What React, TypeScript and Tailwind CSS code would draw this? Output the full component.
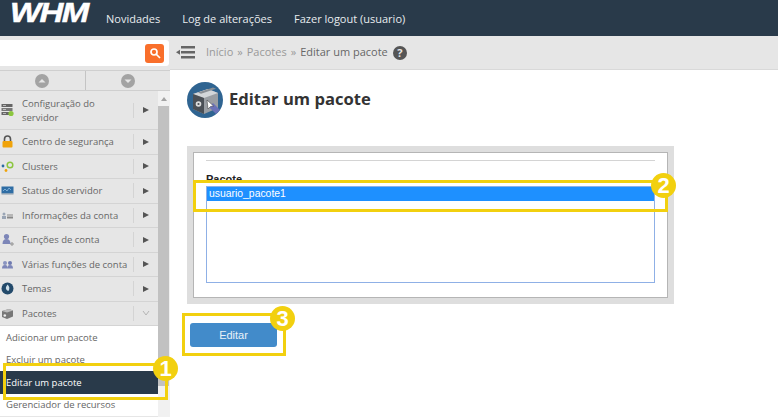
import { ReactNode } from 'react'

const menu: { label: ReactNode; icon: ReactNode; tall?: boolean }[] = [
  {
    label: (
      <>
        Configuração do
        <br />
        servidor
      </>
    ),
    tall: true,
    icon: (
      <svg width="13" height="14" viewBox="0 0 13 14">
        <rect x="0.5" y="1" width="11" height="3" fill="#666" />
        <rect x="0.5" y="5" width="11" height="3" fill="#777" />
        <rect x="0.5" y="9" width="8" height="3" fill="#666" />
        <path d="M2 2.500h3M2 6.500h3M2 10.500h3" stroke="#ddd" strokeWidth="0.7" />
        <circle cx="10" cy="10.500" r="2.600" fill="#8cc63f" />
      </svg>
    ),
  },
  {
    label: 'Centro de segurança',
    icon: (
      <svg width="13" height="13" viewBox="0 0 13 13">
        <path d="M3.500 6V4a3 3 0 0 1 6 0v2" fill="none" stroke="#555" strokeWidth="1.600" />
        <rect x="1.500" y="6" width="10" height="6.500" rx="1" fill="#f0a30a" />
      </svg>
    ),
  },
  {
    label: 'Clusters',
    icon: (
      <svg width="14" height="13" viewBox="0 0 14 13">
        <circle cx="2" cy="6" r="1.400" fill="#2b6ca3" />
        <circle cx="9" cy="5" r="2.800" fill="none" stroke="#8cc63f" strokeWidth="1.500" />
        <circle cx="5" cy="10.500" r="1.400" fill="#f0a30a" />
      </svg>
    ),
  },
  {
    label: 'Status do servidor',
    icon: (
      <svg width="13" height="13" viewBox="0 0 13 13">
        <rect x="0.500" y="2.500" width="12" height="7" fill="#2f6da4" />
        <path d="M2 7l2-2 2 2 2-3 2 2" fill="none" stroke="#9cc7ea" strokeWidth="0.700" />
        <rect x="0.500" y="9.500" width="12" height="1" fill="#8a9aa8" />
      </svg>
    ),
  },
  {
    label: 'Informações da conta',
    icon: (
      <svg width="13" height="13" viewBox="0 0 13 13">
        <circle cx="3" cy="5" r="1.500" fill="#9aa5b5" />
        <rect x="1" y="7" width="4" height="3" fill="#9aa5b5" />
        <rect x="6" y="5.500" width="6" height="1" fill="#888" />
        <rect x="6" y="7.500" width="6" height="2" fill="#888" />
      </svg>
    ),
  },
  {
    label: 'Funções de conta',
    icon: (
      <svg width="13" height="13" viewBox="0 0 13 13">
        <circle cx="5.500" cy="3.500" r="2.600" fill="#7d86b8" />
        <path d="M1.500 11c0-3.500 1.500-5 4-5s4 1.500 4 5z" fill="#7d86b8" />
        <circle cx="11" cy="11" r="1.200" fill="none" stroke="#777" strokeWidth="0.800" />
      </svg>
    ),
  },
  {
    label: 'Várias funções de conta',
    icon: (
      <svg width="13" height="13" viewBox="0 0 13 13">
        <circle cx="4" cy="5" r="2" fill="#8a94c0" />
        <circle cx="9" cy="5" r="2" fill="#6f7ab0" />
        <path d="M1 10.500c0-2.500 1-3.500 3-3.500s2.500 1 2.500 3.500zM6.500 10.500c0-2.500.5-3.500 2.500-3.500s3 1 3 3.500z" fill="#7d86b8" />
      </svg>
    ),
  },
  {
    label: 'Temas',
    icon: (
      <svg width="13" height="13" viewBox="0 0 13 13">
        <circle cx="6.500" cy="6.500" r="6" fill="#234a6b" />
        <path d="M6.500 2.500c2 2 2.500 4 1 6.500-2-.5-3-2-2.500-4z" fill="#cfe0ea" />
      </svg>
    ),
  },
  {
    label: 'Pacotes',
    icon: (
      <svg width="13" height="13" viewBox="0 0 13 13">
        <path d="M1 4l7-2 4 1.500v6L6 12 1 10z" fill="#777" />
        <path d="M1 4l7-2 4 1.500L6 5.500z" fill="#bbb" />
        <circle cx="3.800" cy="8.500" r="1.300" fill="#eee" />
      </svg>
    ),
  },
]

function Badge({ n, className }: { n: number; className: string }) {
  return (
    <div
      className={`absolute flex h-[25px] w-[25px] items-center justify-center rounded-full bg-[#f2d00f] font-['Liberation_Sans',sans-serif] text-[22px] font-bold text-white ${className}`}
    >
      {n}
    </div>
  )
}

export default function App() {
  return (
    <div className="relative flex h-[417px] w-[778px] flex-col overflow-hidden bg-white font-['Open_Sans',sans-serif]">
      <header className="flex h-9 items-center bg-[#293a4a] text-[11px] text-[#e8ecef]">
        <span className="mb-[10px] ml-[10px] h-[24px] w-[96px] origin-left scale-x-[1.18] font-['Liberation_Sans',sans-serif] text-[28px] leading-[24px] font-bold tracking-tighter text-white italic [-webkit-text-stroke:0.5px_white]">
          WHM
        </span>
        <nav className="flex gap-[22px] pt-[3px]">
          <span>Novidades</span>
          <span>Log de alterações</span>
          <span>Fazer logout (usuario)</span>
        </nav>
      </header>

      <div className="flex flex-1 overflow-hidden">
        <aside className="flex w-[170px] flex-col bg-[#e6e6e6]">
          <div className="flex h-[34px] items-center">
            <div className="flex h-[26px] w-[169px] items-center justify-end rounded-r-[3px] bg-white pr-[5px]">
              <div className="flex h-[19px] w-[19px] items-center justify-center rounded-[3px] bg-[#f96f2b]">
                <svg width="12" height="12" viewBox="0 0 12 12" fill="none" stroke="white" strokeWidth="1.700">
                  <circle cx="5" cy="5" r="3" />
                  <path d="M7.500 7.500L11 11" />
                </svg>
              </div>
            </div>
          </div>
          <div className="flex h-[21px] border-y border-[#cfcfcf]">
            <div className="flex flex-1 items-center justify-center border-r border-[#c4c4c4]">
              <svg width="14" height="14" viewBox="0 0 14 14">
                <circle cx="7" cy="7" r="7" fill="#a3a3a3" />
                <path d="M3.500 8.500L7 5l3.500 3.500z" fill="#e6e6e6" />
              </svg>
            </div>
            <div className="flex flex-1 items-center justify-center">
              <svg width="14" height="14" viewBox="0 0 14 14">
                <circle cx="7" cy="7" r="7" fill="#a3a3a3" />
                <path d="M3.500 5.500L7 9l3.500-3.500z" fill="#e6e6e6" />
              </svg>
            </div>
          </div>

          <div className="flex flex-1 overflow-hidden">
            <div className="w-[158px] shrink-0 text-[9.5px] text-[#666]">
              {menu.map((m, i) => (
                <div
                  key={i}
                  className={`flex items-center border-b border-[#d4d4d4] ${m.tall ? 'h-[39px]' : 'h-[24.5px]'}`}
                >
                  <div className="flex w-[22px] shrink-0 justify-start pl-[1px]">{m.icon}</div>
                  <div className="flex-1 pt-[1px] leading-[14px] whitespace-nowrap">{m.label}</div>
                  <div className="flex h-[15px] w-[25px] shrink-0 items-center justify-center border-l border-[#d4d4d4]">
                    {i === 8 ? (
                      <svg width="8" height="6" viewBox="0 0 8 6" fill="none" stroke="#b5b5b5">
                        <path d="M1 1l3 4 3-4" />
                      </svg>
                    ) : (
                      <svg width="6" height="6" viewBox="0 0 6 6">
                        <path d="M0 0l6 3-6 3z" fill="#555" />
                      </svg>
                    )}
                  </div>
                </div>
              ))}
              <div className="h-[90px] bg-white">
                {['Adicionar um pacote', 'Excluir um pacote', 'Editar um pacote', 'Gerenciador de recursos'].map((s) => (
                  <div
                    key={s}
                    className={`flex h-[22.5px] items-center pt-[1px] pl-[6px] ${s === 'Editar um pacote' ? 'bg-[#293a4a] text-white' : ''}`}
                  >
                    {s}
                  </div>
                ))}
              </div>
            </div>
            <div className="flex w-[12px] flex-col bg-[#f1f1f1] pr-[1px]">
              <div className="flex h-[15px] items-center justify-center">
                <svg width="6" height="4" viewBox="0 0 6 4">
                  <path d="M0 4l3-4 3 4z" fill="#a3a3a3" />
                </svg>
              </div>
              <div className="h-[280px] w-full bg-[#c1c1c1]" />
            </div>
          </div>
        </aside>

        <main className="flex flex-1 flex-col">
          <div className="flex h-[34px] items-center gap-[10px] border-b border-[#d9d9d9] bg-[#e6e6e6] pl-[6px] text-[11px]">
            <svg width="19" height="15" viewBox="0 0 19 15" fill="#666">
              <rect x="5" y="1" width="14" height="2.500" />
              <rect x="5" y="6" width="14" height="2.500" />
              <rect x="5" y="11" width="14" height="2.500" />
              <path d="M0 7.200L4 4.700v5z" />
            </svg>
            <div className="ml-[1px] flex items-center gap-[4px] text-[#999]">
              <span>Início</span>
              <span>»</span>
              <span>Pacotes</span>
              <span>»</span>
              <span className="text-[#666]">Editar um pacote</span>
              <span className="ml-[1px] flex h-[14px] w-[14px] items-center justify-center rounded-full bg-[#555] text-[11px] leading-none font-bold text-[#e6e6e6]">
                ?
              </span>
            </div>
          </div>

          <div className="flex flex-1 flex-col pl-[17px]">
            <div className="mt-[12px] flex items-center gap-[5px]">
              <svg width="37" height="37" viewBox="0 0 37 37">
                <circle cx="18" cy="18" r="18" fill="#2f6491" />
                <path d="M6 12l15-5 10 4v15l-14 6-11-5z" fill="#9a9ea3" />
                <path d="M6 12l15-5 10 4-14 5z" fill="#d3d6d9" />
                <path d="M11 10.500l15-5 3 1.200-15 5z" fill="#8a8f95" />
                <path d="M6 12l11 4v16l-11-5z" fill="#4a4f55" />
                <circle cx="11.500" cy="22" r="2.800" fill="#ddd" />
                <circle cx="11.500" cy="22" r="1.100" fill="#4a4f55" />
                <path d="M22 25l7 7 4-4-7-7z" fill="#6b72b8" />
                <path d="M20 18l1 9 2.500-2.500 3-.5z" fill="#fff" stroke="#333" strokeWidth="0.500" />
              </svg>
              <h1 className="pb-[2px] text-[16.6px] font-bold text-[#333]">Editar um pacote</h1>
            </div>

            <div className="mt-[27px] h-[158px] w-[487px] border-[6px] border-[#dedede]">
              <div className="h-full border border-[#b5b5b5] px-[12px] pt-[7px]">
                <div className="border-t border-[#d4d4d4]" />
                <div className="mt-[11px] font-['Liberation_Sans',sans-serif] text-[11px] leading-[14px] font-bold text-[#222]">
                  Pacote
                </div>
                <div className="h-[97px] border border-[#8fb0e6]">
                  <div className="h-[14px] bg-[#1e90ff] pl-[2px] font-['Liberation_Sans',sans-serif] text-[10.4px] leading-[14px] text-white">
                    usuario_pacote1
                  </div>
                </div>
              </div>
            </div>

            <button className="mt-[19px] ml-[3px] h-[24px] w-[87px] rounded-[3px] bg-[#428bca] font-['Liberation_Sans',sans-serif] text-[11px] text-[#e8f1f8]">
              Editar
            </button>
          </div>
        </main>
      </div>

      <div className="absolute top-[363px] left-[3px] h-[37px] w-[165px] border-[3px] border-[#f2d00f]" />
      <Badge n={1} className="top-[356px] left-[153px]" />
      <div className="absolute top-[180px] left-[193px] h-[32px] w-[475px] border-[3px] border-[#f2d00f]" />
      <Badge n={2} className="top-[173px] left-[651px]" />
      <div className="absolute top-[313px] left-[182px] h-[43px] w-[104px] border-[3px] border-[#f2d00f]" />
      <Badge n={3} className="top-[306px] left-[270px]" />
    </div>
  )
}
